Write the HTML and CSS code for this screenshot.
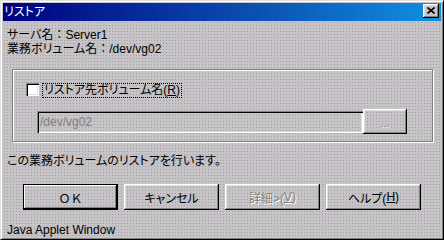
FILE: index.html
```html
<!DOCTYPE html>
<html lang="ja">
<head>
<meta charset="utf-8">
<title>リストア</title>
<link rel="stylesheet" href="styles.css">
</head>
<body>
<div class="window">
  <div class="titlebar">
    <span class="title">リストア</span>
    <span class="close"><svg width="8" height="7" viewBox="0 0 8 7"><path d="M0.5 0.5 L7.5 6.5 M7.5 0.5 L0.5 6.5" stroke="#000" stroke-width="1.6" fill="none"/></svg></span>
  </div>
  <div class="content">
    <div class="info">
      <div class="line">サーバ名<span class="full">：</span>Server1</div>
      <div class="line">業務ボリューム名<span class="full">：</span>/dev/vg02</div>
    </div>
    <div class="group">
      <div class="check-row">
        <span class="checkbox"></span>
        <span class="label">リストア先ボリューム名(<u>R</u>)</span>
      </div>
      <div class="field-row">
        <div class="field">/dev/vg02</div>
        <div class="browse">...</div>
      </div>
    </div>
    <div class="line msg">この業務ボリュームのリストアを行います。</div>
    <div class="buttons">
      <div class="btn default"><span class="full">ＯＫ</span></div>
      <div class="btn">キャンセル</div>
      <div class="btn disabled">詳細&gt;(<u>V</u>)</div>
      <div class="btn">ヘルプ(<u>H</u>)</div>
    </div>
    <div class="line status">Java Applet Window</div>
  </div>
</div>
</body>
</html>
```

FILE: styles.css
```css
* { box-sizing: border-box; }
html, body { margin: 0; padding: 0; }
body {
  width: 444px;
  height: 240px;
  overflow: hidden;
  font-family: "Liberation Sans", "Noto Sans CJK JP", sans-serif;
  font-size: 12px;
  color: #000;
  font-feature-settings: "palt";
}
.full { font-feature-settings: normal; }
.window {
  width: 444px;
  height: 240px;
  border: 1px solid;
  border-color: #dfdfdf #000 #000 #dfdfdf;
  box-shadow: inset 1px 1px 0 #fff, inset -1px -1px 0 #808080;
  padding: 2px;
  background-color: #c6c4c6;
  background-image: conic-gradient(from 270deg at 1px 1px, #a49ca4 90deg, transparent 0);
  background-size: 3px 3px;
  display: flex;
  flex-direction: column;
}
.titlebar {
  height: 18px;
  flex: none;
  background: linear-gradient(90deg, #000080, #0a4cb0 55%, #1090e0);
  display: flex;
  align-items: center;
  justify-content: space-between;
  padding: 0 2px 0 1px;
}
.title {
  color: #fff;
  line-height: 18px;
  height: 18px;
}
.close {
  width: 16px;
  height: 14px;
  margin-top: -2px;
  background: #c6c4c6;
  box-shadow: inset -1px -1px 0 #000, inset 1px 1px 0 #fff, inset -2px -2px 0 #808080, inset 2px 2px 0 #dfdfdf;
  display: flex;
  align-items: center;
  justify-content: center;
}
.close svg { display: block; margin-top: -1px; }
.content {
  padding: 7px 0 0 4px;
}
.line {
  height: 14px;
  line-height: 14px;
  white-space: nowrap;
}
.group {
  margin: 13px 0 0 5px;
  width: 421px;
  height: 73px;
  border: 1px solid #808080;
  box-shadow: 1px 1px 0 #fff, inset 1px 1px 0 #fff;
  padding: 13px 0 0 13px;
}
.check-row {
  display: flex;
  align-items: flex-start;
  height: 15px;
}
.checkbox {
  width: 13px;
  height: 13px;
  flex: none;
  background: #fff;
  box-shadow: inset 1px 1px 0 #808080, inset 2px 2px 0 #000, inset -1px -1px 0 #fff, inset -2px -2px 0 #dfdfdf;
}
.label {
  margin-left: 3px;
  height: 15px;
  line-height: 13px;
  border: 1px dotted #000;
  padding: 0 1px;
  white-space: nowrap;
}
.field-row {
  display: flex;
  align-items: center;
  margin: 11px 0 0 11px;
}
.field {
  width: 326px;
  height: 22px;
  box-shadow: inset 1px 1px 0 #808080, inset 2px 2px 0 #000, inset -1px -1px 0 #fff, inset -2px -2px 0 #dfdfdf;
  color: #808080;
  padding: 0 3px;
  line-height: 22px;
}
.browse {
  width: 44px;
  height: 25px;
  box-shadow: inset -1px -1px 0 #000, inset 1px 1px 0 #fff, inset -2px -2px 0 #808080, inset 2px 2px 0 #dfdfdf;
  color: #808080;
  text-shadow: 1px 1px 0 #fff;
  display: flex;
  align-items: center;
  justify-content: center;
  padding-top: 4px;
  font-size: 10px;
}
.msg { margin-top: 12px; }
.buttons {
  display: flex;
  gap: 6px;
  margin: 16px 0 0 16px;
}
.btn {
  width: 95px;
  height: 26px;
  display: flex;
  align-items: center;
  justify-content: center;
  white-space: nowrap;
  box-shadow: inset -1px -1px 0 #000, inset 1px 1px 0 #fff, inset -2px -2px 0 #808080, inset 2px 2px 0 #dfdfdf;
}
.btn.default {
  border: 1px solid #000;
  box-shadow: inset -1px -1px 0 #000, inset 1px 1px 0 #fff, inset -2px -2px 0 #808080;
}
.btn.disabled {
  color: #808080;
  text-shadow: 1px 1px 0 #fff;
}
.status { margin-top: 13px; }
```
